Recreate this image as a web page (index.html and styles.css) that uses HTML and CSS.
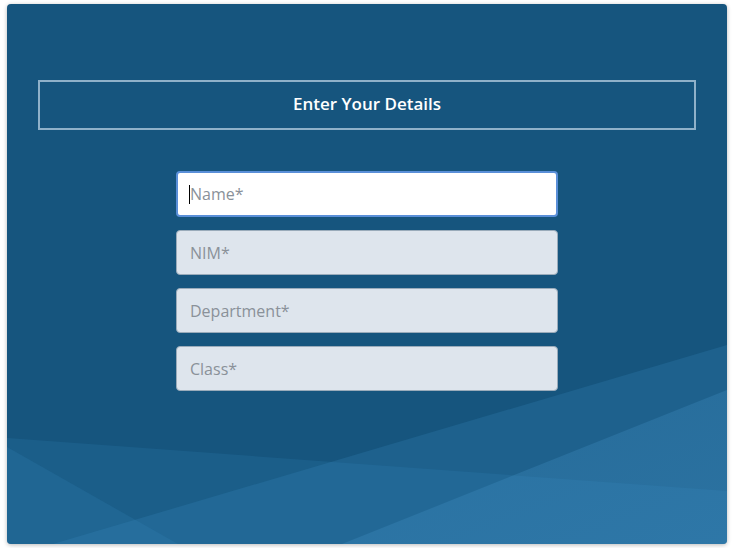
FILE: index.html
```html
<!DOCTYPE html>
<html lang="en">
<head>
<meta charset="utf-8">
<title>Enter Your Details</title>
<link rel="stylesheet" href="styles.css">
</head>
<body>
<main class="card">
  <svg class="bg" viewBox="0 0 720 540" preserveAspectRatio="none" aria-hidden="true">
    <defs>
      <linearGradient id="g1" x1="0" y1="0" x2="1" y2="1">
        <stop offset="0" stop-color="#4a9ad0" stop-opacity="0.18"/>
        <stop offset="1" stop-color="#4a9ad0" stop-opacity="0.30"/>
      </linearGradient>
    </defs>
    <polygon points="0,434 720,487 720,540 0,540" fill="#3a8cc4" fill-opacity="0.16"/>
    <polygon points="0,443 171,540 0,540" fill="#3a8cc4" fill-opacity="0.18"/>
    <polygon points="46,540 720,341 720,540" fill="#3a8cc4" fill-opacity="0.22"/>
    <polygon points="335,540 720,386 720,540" fill="url(#g1)"/>
  </svg>
  <div class="content">
    <h1 class="title">Enter Your Details</h1>
    <form class="form">
      <div class="field-wrap">
        <input class="field field-active" type="text" placeholder="Name*" autofocus>
        <span class="caret"></span>
      </div>
      <input class="field" type="text" placeholder="NIM*">
      <input class="field" type="text" placeholder="Department*">
      <input class="field" type="text" placeholder="Class*">
    </form>
  </div>
</main>
</body>
</html>
```
FILE: styles.css
```css
html, body {
  margin: 0;
  background: #ffffff;
}
body {
  padding: 4px 7px;
  font-family: "Open Sans", "Liberation Sans", sans-serif;
}
.card {
  position: relative;
  width: 720px;
  height: 540px;
  box-sizing: border-box;
  background: #16557e;
  border-radius: 4px;
  box-shadow: 0 1px 4px rgba(0, 0, 0, 0.28);
  overflow: hidden;
}
.bg {
  position: absolute;
  left: 0;
  top: 0;
  width: 720px;
  height: 540px;
  display: block;
}
.content {
  position: relative;
  padding: 76px 31px 0;
}
.title {
  margin: 0;
  height: 50px;
  box-sizing: border-box;
  border: 2px solid #8fb1c9;
  padding-bottom: 3px;
  display: flex;
  align-items: center;
  justify-content: center;
  color: #ffffff;
  font-size: 17px;
  font-weight: 600;
}
.form {
  margin: 41px auto 0;
  width: 382px;
  display: flex;
  flex-direction: column;
  gap: 13px;
}
.field-wrap {
  position: relative;
  display: flex;
  flex-direction: column;
}
.field {
  height: 45px;
  box-sizing: border-box;
  margin: 0;
  padding: 0 13px;
  border: 1px solid #9aabba;
  border-radius: 4px;
  background: #dee5ed;
  font-family: "Open Sans", "Liberation Sans", sans-serif;
  font-size: 16px;
  color: #333;
  outline: none;
}
.field::placeholder {
  color: #8a9199;
}
.field-active {
  height: 46px;
  background: #ffffff;
  border: 2px solid #5a8fd8;
  padding: 0 12px;
}
.caret {
  position: absolute;
  left: 13px;
  top: 14px;
  width: 1px;
  height: 19px;
  background: #000000;
}
```
